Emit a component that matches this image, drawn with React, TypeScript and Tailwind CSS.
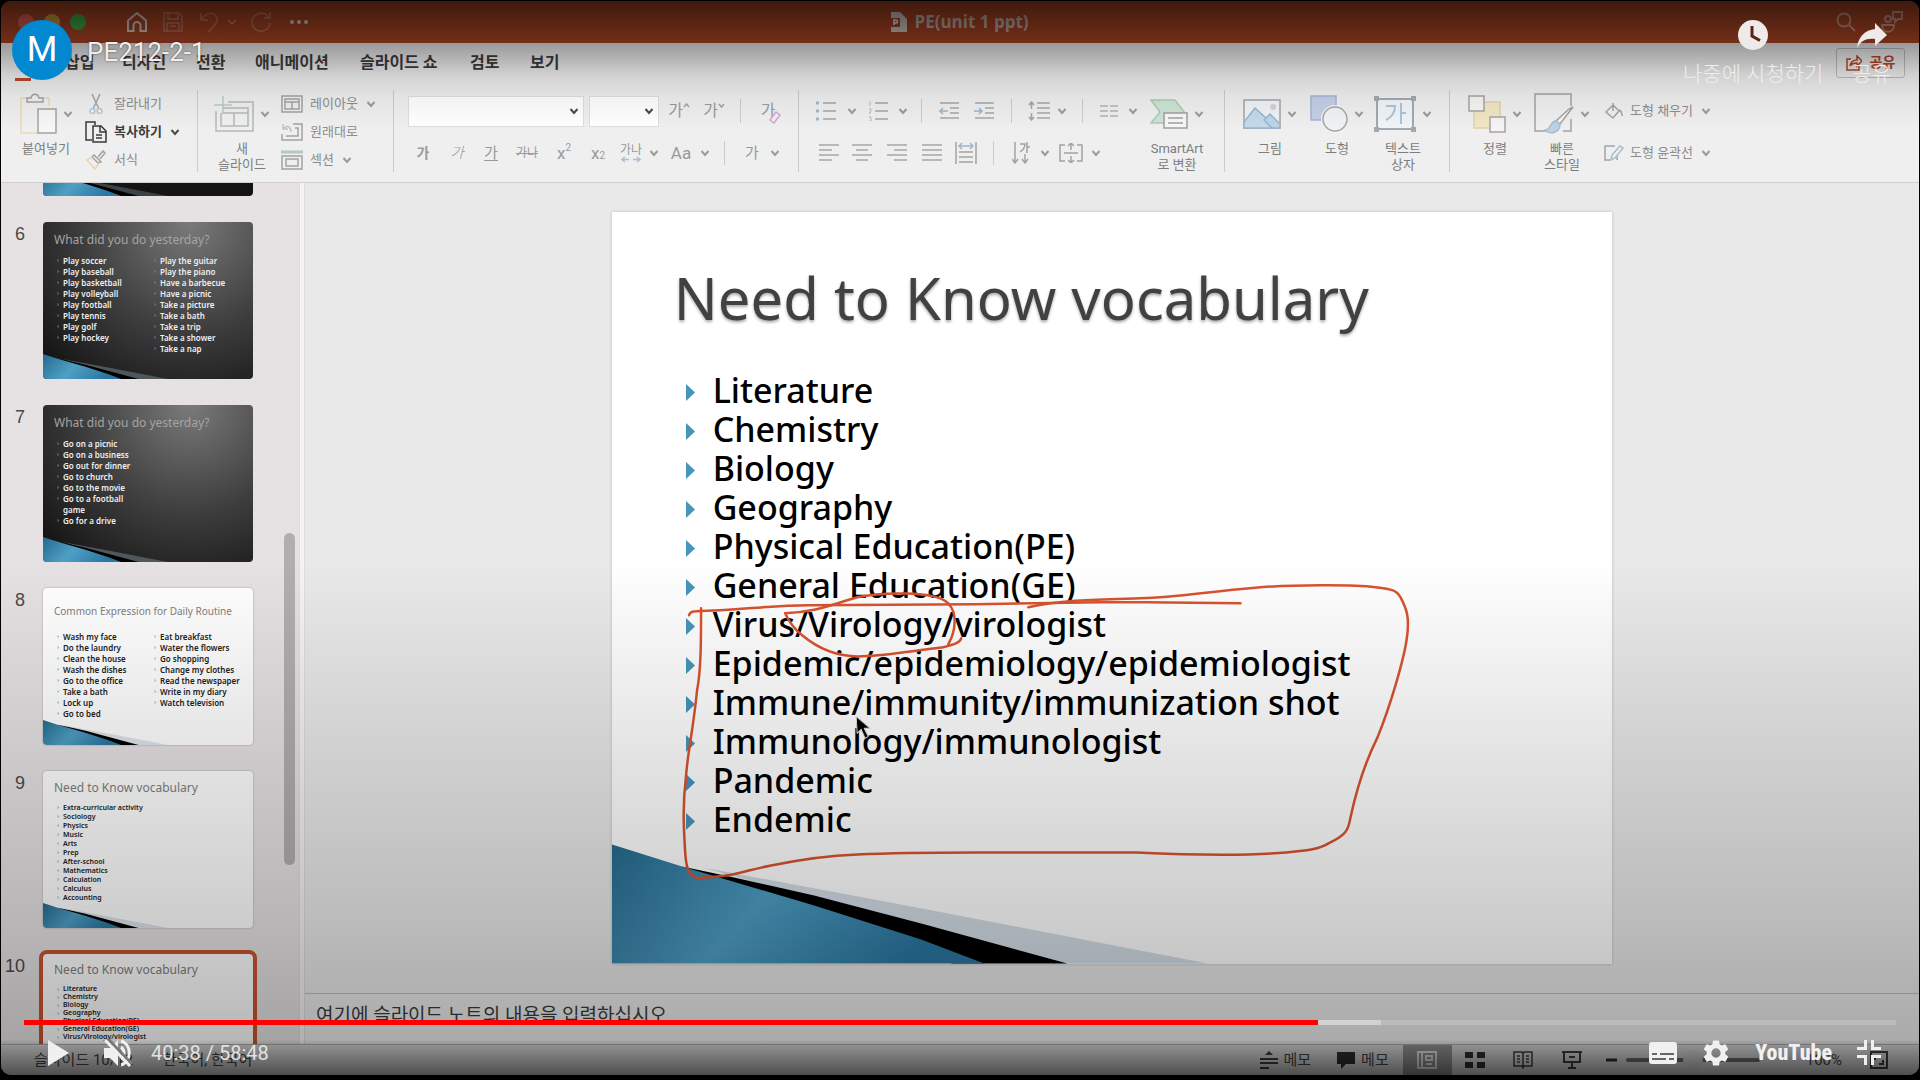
import React from "react";

const KR = "font-['Roboto','Noto_Sans_CJK_KR',sans-serif]";

type IconProps = { w: number; h: number; children: React.ReactNode; className?: string; stroke?: string; sw?: number };
function Svg({ w, h, children, className = "", stroke = "#a3a3a3", sw = 1.5 }: IconProps) {
  return (
    <svg width={w} height={h} viewBox={`0 0 ${w} ${h}`} fill="none" stroke={stroke} strokeWidth={sw} className={`shrink-0 ${className}`} aria-hidden="true">
      {children}
    </svg>
  );
}

function Chevron({ dark = false }: { dark?: boolean }) {
  return (
    <Svg w={10} h={8} stroke={dark ? "#4a4a4a" : "#9b9b9b"} sw={2}>
      <path d="M1.5 2 5 6l3.5-4" />
    </Svg>
  );
}

function Rule() {
  return <div className="h-[82px] w-px shrink-0 bg-[#cccccc]" />;
}

function MiniRule() {
  return <div className="h-6 w-px bg-[#cccccc]" />;
}

function BigButton({ icon, lines, className = "w-[60px]" }: { icon: React.ReactNode; lines: string[]; className?: string }) {
  return (
    <button type="button" className={`flex shrink-0 flex-col items-center text-[13px] leading-4 text-[#7d7d7d] ${className}`}>
      <span className="mb-[3px] flex h-12 items-center gap-1.5">
        {icon}
        <Chevron />
      </span>
      {lines.map((l) => (
        <span key={l} className="whitespace-nowrap">{l}</span>
      ))}
    </button>
  );
}

function RowButton({ icon, label, chevron = false, dark = false, iconClass = "w-6" }: { icon: React.ReactNode; label: string; chevron?: boolean; dark?: boolean; iconClass?: string }) {
  return (
    <button type="button" className={`flex h-7 items-center whitespace-nowrap text-[13px] ${dark ? "font-bold text-[#3c3c3c]" : "text-[#8c8c8c]"}`}>
      <span className={`mr-1.5 flex justify-center ${iconClass}`}>{icon}</span>
      {label}
      {chevron && <span className="ml-2"><Chevron dark={dark} /></span>}
    </button>
  );
}

function Cell({ children, label, className = "" }: { children: React.ReactNode; label: string; className?: string }) {
  return (
    <button type="button" aria-label={label} className={`flex items-center justify-center text-[16px] leading-5 text-[#9a9a9a] ${className}`}>
      {children}
    </button>
  );
}

function Lines({ rows, w = 20, children }: { rows: [number, number][]; w?: number; children?: React.ReactNode }) {
  const gap = rows.length === 3 ? 8 : 5;
  return (
    <Svg w={w} h={20} stroke="#a6a6a6" sw={1.6}>
      {rows.map(([a, b], i) => (
        <path key={i} d={`M${a} ${2 + i * gap}H${b}`} />
      ))}
      {children}
    </Svg>
  );
}

function TitleBar() {
  return (
    <header className="grid h-[42px] shrink-0 grid-cols-3 items-center bg-[#b54826]">
      <div className="flex items-center pl-[17px] text-[#d8c0b8]">
        <div className="flex gap-[10px]">
          <span className="size-4 rounded-full bg-[#e8665c]" />
          <span className="size-4 rounded-full bg-[#d8a43c]" />
          <span className="size-4 rounded-full bg-[#42b549]" />
        </div>
        <div className="ml-10 flex items-center">
          <button type="button" aria-label="홈">
            <Svg w={22} h={22} stroke="#ead9d3" sw={2}><path d="M2 9.5 11 2l9 7.5V20h-5.500v-5.500a3.500 3.500 0 0 0-7 0V20H2z" /></Svg>
          </button>
          <button type="button" aria-label="저장" className="ml-[15px] opacity-35">
            <Svg w={20} h={20} stroke="#ead9d3"><path d="M1 1h15l3 3v15H1zM5 1v6h10V1M4 19v-8h12v8M7 14h6" /></Svg>
          </button>
          <button type="button" aria-label="실행 취소" className="ml-4 opacity-35">
            <Svg w={20} h={22} stroke="#ead9d3"><path d="M2 2v7h7M2 9c4-7 12-8 15-4 4 5-2 10-8 16" /></Svg>
          </button>
          <span className="ml-2 opacity-45"><Svg w={10} h={8} stroke="#ead9d3"><path d="m1 2 4 4 4-4" /></Svg></span>
          <button type="button" aria-label="다시 실행" className="ml-[13px] opacity-35">
            <Svg w={22} h={20} stroke="#ead9d3"><path d="M19 6a9 9 0 1 0 1 5M20 0v6h-6" /></Svg>
          </button>
          <button type="button" aria-label="더 보기" className="ml-[17px]">
            <Svg w={20} h={6} stroke="none"><g fill="#ead9d3"><circle cx="3" cy="3" r="2" /><circle cx="10" cy="3" r="2" /><circle cx="17" cy="3" r="2" /></g></Svg>
          </button>
        </div>
      </div>
      <div className="flex items-center justify-center gap-[7px] font-['Open_Sans','Noto_Sans_CJK_KR',sans-serif] text-[17px] font-bold text-[#cfb9b0]">
        <Svg w={16} h={20} stroke="none">
          <path d="M0 0h9l7 7v13H0z" fill="#e0d6d2" />
          <path d="M0 6h9v9H0z" fill="#b8492a" />
          <path d="M3 13V8h2a1.500 1.500 0 0 1 0 3H3" stroke="#fff" fill="none" />
        </Svg>
        PE(unit 1 ppt)
      </div>
      <div className="flex items-center justify-end gap-6 pr-[15px]">
        <button type="button" aria-label="검색" className="opacity-60">
          <Svg w={20} h={20} stroke="#ead9d3" sw={1.8}><circle cx="8" cy="8" r="6.500" /><path d="m13 13 6 6" /></Svg>
        </button>
        <button type="button" aria-label="공동 작업" className="opacity-60">
          <Svg w={24} h={22} stroke="#ead9d3" sw={1.8}><circle cx="8" cy="8" r="3" /><path d="M2 14h12c0 9-12 9-12 0zM13 1h9v7h-4l-3 3V8h-2z" /></Svg>
        </button>
      </div>
    </header>
  );
}

function Tabs() {
  return (
    <nav className="flex h-[39px] shrink-0 items-center whitespace-nowrap text-[16px] font-bold text-[#3c3c3c]">
      <a href="#home" aria-label="홈" className="ml-3.5 flex h-full w-[50px] items-end pb-px"><span className="h-[3px] w-4 bg-[#b8492a]" /></a>
      <a href="#insert" className="w-[57px]">삽입</a>
      <a href="#design" className="w-[74px]">디자인</a>
      <a href="#transition" className="w-[59px]">전환</a>
      <a href="#animation" className="w-[105px]">애니메이션</a>
      <a href="#show" className="w-[110px]">슬라이드 쇼</a>
      <a href="#review" className="w-[60px]">검토</a>
      <a href="#view">보기</a>
      <button type="button" className="ml-auto mr-[14px] flex h-[30px] w-[69px] items-center justify-center gap-2 rounded-[3px] border border-[#bdbdbd] text-[14px] text-[#b8492a]">
        <Svg w={16} h={16} stroke="#b8492a"><path d="M5 4H1v11h12v-4M4 11c1-5 4-6 7-6V1l5 5-5 5V8c-3 0-5 0-7 3z" /></Svg>
        공유
      </button>
    </nav>
  );
}

function Ribbon() {
  return (
    <div className="flex h-[101px] shrink-0 items-start border-b border-[#cfcfcf] pt-2">
      <BigButton
        className="ml-[15px] w-[60px]"
        lines={["붙여넣기"]}
        icon={
          <Svg w={37} h={42}>
            <path d="M8 5H1v35h18M22 5h7v8" stroke="#ecd9b4" />
            <path d="M7 9V5h4c1-5 7-5 8 0h4v4z" />
            <path d="M18 16h18v24H18z" fill="#f6f6f6" />
          </Svg>
        }
      />
      <div className="ml-2 w-[113px]">
        <RowButton label="잘라내기" icon={<Svg w={14} h={22}><path d="m3 1 7 15M11 1 4 16" /><g stroke="#b5cbdc"><circle cx="3.500" cy="18" r="2.500" /><circle cx="10.500" cy="18" r="2.500" /></g></Svg>} />
        <RowButton dark chevron label="복사하기" icon={<Svg w={22} h={22} stroke="#3a3a3a"><path d="M7 19H1V1h9v3M8 5h8l5 5v11H8zM15 5v6h6M11 14h6M11 17h6" /></Svg>} />
        <RowButton label="서식" icon={<Svg w={20} h={20}><path d="m12 7 5-6 2 2-5 6M8 5l7 7-3 1-6-6z" /><path d="m6 7-5 3 8 9 4-6" stroke="#ecd3a8" /></Svg>} />
      </div>
      <Rule />
      <BigButton
        className="ml-[10px] w-[68px]"
        lines={["새", "슬라이드"]}
        icon={<Svg w={40} h={36}><path d="M14 6h25v29H2V15M8 12h26v18H7V17M20 17v13M8 17h26" stroke="#b4b9ba" /><path d="M9 0v17M0 9h18" stroke="#b8cccc" /></Svg>}
      />
      <div className="ml-1 w-[113px]">
        <RowButton iconClass="w-6" chevron label="레이아웃" icon={<Svg w={22} h={18}><path d="M1 1h20v16H1zM4 4h14v10H4zM4 7h14M11 7v7" /></Svg>} />
        <RowButton iconClass="w-6" label="원래대로" icon={<Svg w={22} h={18}><path d="M12 1h9v16H1v-6M5 13h12V5h-3" /><path d="M2 1v5h5M2 6c4-5 8-2 8 3" stroke="#b9c6cf" /></Svg>} />
        <RowButton iconClass="w-6" chevron label="섹션" icon={<Svg w={22} h={20}><path d="M0 2h22" stroke="#b3c9c5" strokeWidth="3" /><path d="M1 6h20v13H1zM5 9h12v7H5z" /></Svg>} />
      </div>
      <Rule />
      <div className="ml-3.5 w-[390px] shrink-0">
        <div className="grid h-[42px] grid-cols-[176px_5px_70px_40px_30px_22px_34px] items-center justify-items-center">
          <button type="button" aria-label="글꼴" className="flex h-[31px] w-full items-center justify-end border border-[#dedede] bg-white pr-1"><Chevron dark /></button>
          <span />
          <button type="button" aria-label="글꼴 크기" className="flex h-[31px] w-full items-center justify-end border border-[#dedede] bg-white pr-1"><Chevron dark /></button>
          <Cell label="글꼴 크게">가<Svg w={7} h={5} className="mb-3"><path d="m1 4 2.500-3L6 4" /></Svg></Cell>
          <Cell label="글꼴 작게" className="text-[14px]">가<Svg w={7} h={5} className="mb-3"><path d="m1 1 2.500 3L6 1" /></Svg></Cell>
          <MiniRule />
          <Cell label="서식 지우기">
            <span className="relative">가<Svg w={12} h={14} stroke="#cfa9d3" className="absolute -bottom-1 left-2"><path d="m7 1 4 3-6 8-4-3z" fill="#f2eef2" /></Svg></span>
          </Cell>
        </div>
        <div className="grid h-[42px] grid-cols-[30px_38px_30px_42px_32px_36px_30px_16px_38px_10px_28px_28px_18px] items-center justify-items-center">
          <Cell label="굵게"><b className="text-[14px] font-bold">가</b></Cell>
          <Cell label="기울임꼴"><i className="text-[15px] font-light">가</i></Cell>
          <Cell label="밑줄"><u className="text-[15px] underline-offset-2">가</u></Cell>
          <Cell label="취소선"><s className="text-[12px]">가나</s></Cell>
          <Cell label="위 첨자" className="text-[17px]">x<sup className="text-[10px]">2</sup></Cell>
          <Cell label="아래 첨자" className="text-[17px]">x<sub className="text-[10px]">2</sub></Cell>
          <Cell label="문자 간격">
            <span className="flex flex-col items-center text-[12px] leading-3">가나<Svg w={20} h={7} stroke="#a9c0d4"><path d="M8 3.500H1M4 1 1 3.500 4 6M12 3.500h7M16 1l3 2.500L16 6" /></Svg></span>
          </Cell>
          <Chevron />
          <Cell label="대/소문자" className="text-[17px]">Aa</Cell>
          <Chevron />
          <MiniRule />
          <Cell label="글꼴 색"><span className="text-[15px]">가</span></Cell>
          <Chevron />
        </div>
      </div>
      <Rule />
      <div className="ml-3.5 w-[329px] shrink-0">
        <div className="grid h-[42px] grid-cols-[26px_26px_26px_24px_12px_44px_26px_28px_28px_18px_22px_32px_16px] items-center justify-items-center">
          <Cell label="글머리 기호"><Lines rows={[[7, 20], [7, 20], [7, 20]]}><path d="M0 2h3M0 10h3M0 18h3" stroke="#9fb7cb" strokeWidth="3" /></Lines></Cell>
          <Chevron />
          <Cell label="번호 매기기"><Lines rows={[[7, 20], [7, 20], [7, 20]]}><path d="M2 0v5M1 8h2v2l-2 2h2M1 16h2v4H1" stroke="#a9bccb" strokeWidth="1" /></Lines></Cell>
          <Chevron />
          <MiniRule />
          <Cell label="내어쓰기"><Lines rows={[[1, 20], [11, 20], [11, 20], [1, 20]]}><path d="M9 10H1M4 7l-3 3 3 3" stroke="#9fb7cb" /></Lines></Cell>
          <Cell label="들여쓰기"><Lines rows={[[1, 20], [11, 20], [11, 20], [1, 20]]}><path d="M0 10h8M5 7l3 3-3 3" stroke="#9fb7cb" /></Lines></Cell>
          <MiniRule />
          <Cell label="줄 간격"><Lines w={22} rows={[[9, 22], [9, 22], [9, 22], [9, 22]]}><path d="M3.500 1v7M1 4l2.500-3L6 4M3.500 19v-7M1 16l2.500 3L6 16" /></Lines></Cell>
          <Chevron />
          <MiniRule />
          <Cell label="단"><Svg w={18} h={14} stroke="#b4b4b4"><path d="M0 2h8M0 7h8M0 12h8M10 2h8M10 7h8M10 12h8" /></Svg></Cell>
          <Chevron />
        </div>
        <div className="grid h-[42px] grid-cols-[32px_34px_35px_35px_34px_20px_36px_12px_40px_10px] items-center justify-items-center">
          <Cell label="왼쪽 맞춤"><Lines rows={[[0, 20], [0, 13], [0, 20], [0, 13]]} /></Cell>
          <Cell label="가운데 맞춤"><Lines rows={[[0, 20], [4, 16], [0, 20], [4, 16]]} /></Cell>
          <Cell label="오른쪽 맞춤"><Lines rows={[[0, 20], [7, 20], [0, 20], [7, 20]]} /></Cell>
          <Cell label="양쪽 맞춤"><Lines rows={[[0, 20], [0, 20], [0, 20], [0, 20]]} /></Cell>
          <Cell label="균등 분할"><Svg w={22} h={22}><path d="M1 0v22M21 0v22M4 10h14M4 15h14M4 20h14" /><path d="M4 4h14M7 1 4 4l3 3M15 1l3 3-3 3" stroke="#9fb7cb" /></Svg></Cell>
          <MiniRule />
          <Cell label="텍스트 방향"><Svg w={18} h={22}><path d="M3 0v20M0 17l3 4 3-4M13 12v8M10 17l3 4 3-4M8 2h5c0 4-2 6-5 8M15 0v11M15 5h3" /></Svg></Cell>
          <Chevron />
          <Cell label="텍스트 맞춤"><Svg w={24} h={20}><path d="M6 2H1v16h5M18 2h5v16h-5M5 10h14M12 0v7M9 3l3-3 3 3M12 20v-7M9 17l3 3 3-3" /></Svg></Cell>
          <Chevron />
        </div>
      </div>
      <BigButton
        className="w-[70px]"
        lines={["SmartArt", "로 변환"]}
        icon={<Svg w={38} h={30}><path d="M1 1h24l10 13-6 10H1l9-11z" fill="#cde3d4" stroke="#a8ccb4" /><path d="M14 14h23v15H14zM18 19h15M18 24h15" fill="#f7f7f7" stroke="#a0a0a0" /></Svg>}
      />
      <span className="w-3" />
      <Rule />
      <BigButton
        className="ml-[15px] w-[60px]"
        lines={["그림"]}
        icon={<Svg w={38} h={30}><path d="M1 1h36v28H1z" fill="#eef2f6" /><path d="M1 23 12 9l22 20H1z" fill="#c4d9ec" stroke="#9ab3cb" /><path d="m21 21 6-6 10 10v4h-8z" fill="#bcd4ea" stroke="#9ab3cb" /><circle cx="30" cy="8" r="3" fill="#d8d1c8" stroke="none" /></Svg>}
      />
      <BigButton
        className="ml-[7px] w-[60px]"
        lines={["도형"]}
        icon={<Svg w={38} h={38}><path d="M1 1h25v24H1z" fill="#c2cfe6" stroke="#a5b5d2" /><circle cx="25" cy="24" r="14" fill="#f1f2f4" stroke="none" /><circle cx="25" cy="24" r="12" fill="#f1f2f4" stroke="#a6a6a6" /></Svg>}
      />
      <BigButton
        className="ml-[5px] w-[62px]"
        lines={["텍스트", "상자"]}
        icon={
          <Svg w={42} h={36} stroke="#a2a8b0" sw={2}>
            <path d="M3 3h36v30H3z" fill="#f1f4f7" />
            <g fill="#a2a8b0" stroke="none"><path d="M0 0h5v5H0zM37 0h5v5h-5zM0 31h5v5H0zM37 31h5v5h-5z" /></g>
            <path d="M12 10h9c0 7-3 11-9 14M27 7v21M27 17h5" stroke="#a9c4dc" />
          </Svg>
        }
      />
      <span className="w-[15px]" />
      <Rule />
      <BigButton
        className="ml-[15px] w-[60px]"
        lines={["정렬"]}
        icon={<Svg w={38} h={38}><path d="M6 7h26v26H6z" fill="#f0e6c4" stroke="#e0d2a8" /><path d="M1 1h15v15H1zM22 22h15v15H22z" fill="#f6f3f3" stroke="#a8a3a3" /></Svg>}
      />
      <BigButton
        className="ml-[7px] w-[60px]"
        lines={["빠른", "스타일"]}
        icon={<Svg w={40} h={42}><path d="M13 38H1V1h36v12M37 26v12h-8" /><path d="M39 14 26 31l-4-3L35 16z" fill="#f4f4f4" /><path d="M22 28c-6 0-4 8-11 9 5 5 15 3 15-6z" fill="#b9d2e6" stroke="#a4bdd1" /></Svg>}
      />
      <div className="ml-3">
        <div className="flex h-[42px] items-center">
          <RowButton iconClass="w-5" chevron label="도형 채우기" icon={<Svg w={18} h={18}><path d="m8 3 6 6-6 7-7-6zM8 9V1M14 8c3 1 3 4 3 6" /></Svg>} />
        </div>
        <div className="flex h-[42px] items-center">
          <RowButton iconClass="w-5" chevron label="도형 윤곽선" icon={<Svg w={20} h={16}><path d="M11 1H1v14h5M13 15v-4" /><path d="m7 15 1-5 8-9 3 2-8 10z" stroke="#a9bccb" /></Svg>} />
        </div>
      </div>
    </div>
  );
}

function Wave({ id, shade = "#d3dde7" }: { id: string; shade?: string }) {
  return (
    <svg viewBox="0 0 1000 751" preserveAspectRatio="none" className="absolute inset-0 size-full" aria-hidden="true">
      <defs>
        <linearGradient id={id} x1="0" y1="0" x2="1" y2="0.3">
          <stop offset="0" stopColor="#256a8e" />
          <stop offset="0.500" stopColor="#4f9fc5" />
          <stop offset="1" stopColor="#2a76a0" />
        </linearGradient>
      </defs>
      <path d="M90 655 310 696 595 751H440z" fill={shade} />
      <path d="M70 654 122 665 202 683 309 711 455 751H340L200 710z" fill="#000" />
      <path d="M0 632 70 654 202 693 309 727 372 751H0z" fill={`url(#${id})`} />
    </svg>
  );
}

type Thumb = { n: number; title: string; dark?: boolean; cols: string[][]; titleClass: string; listClass: string };
const thumbs: Thumb[] = [
  {
    n: 6, title: "What did you do yesterday?", dark: true,
    titleClass: "pt-1.5 text-[12px] leading-6", listClass: "pt-[3px] text-[8px] leading-[11px]",
    cols: [
      ["Play soccer", "Play baseball", "Play basketball", "Play volleyball", "Play football", "Play tennis", "Play golf", "Play hockey"],
      ["Play the guitar", "Play the piano", "Have a barbecue", "Have a picnic", "Take a picture", "Take a bath", "Take a trip", "Take a shower", "Take a nap"],
    ],
  },
  {
    n: 7, title: "What did you do yesterday?", dark: true,
    titleClass: "pt-1.5 text-[12px] leading-6", listClass: "pt-[3px] text-[8px] leading-[11px]",
    cols: [["Go on a picnic", "Go on a business", "Go out for dinner", "Go to church", "Go to the movie", "Go to a football game", "Go for a drive"]],
  },
  {
    n: 8, title: "Common Expression for Daily Routine",
    titleClass: "pt-[11px] text-[10px] leading-6", listClass: "pt-2 text-[8px] leading-[11px]",
    cols: [
      ["Wash my face", "Do the laundry", "Clean the house", "Wash the dishes", "Go to the office", "Take a bath", "Lock up", "Go to bed"],
      ["Eat breakfast", "Water the flowers", "Go shopping", "Change my clothes", "Read the newspaper", "Write in my diary", "Watch television"],
    ],
  },
  {
    n: 9, title: "Need to Know vocabulary",
    titleClass: "pt-[5px] text-[12px] leading-6", listClass: "pt-[3px] text-[7px] leading-[9px]",
    cols: [["Extra-curricular activity", "Sociology", "Physics", "Music", "Arts", "Prep", "After-school", "Mathematics", "Calculation", "Calculus", "Accounting"]],
  },
  {
    n: 10, title: "Need to Know vocabulary",
    titleClass: "pt-1 text-[12px] leading-6", listClass: "pt-[3px] text-[7px] leading-[8px]",
    cols: [["Literature", "Chemistry", "Biology", "Geography", "Physical Education(PE)", "General Education(GE)", "Virus/Virology/virologist"]],
  },
];

function Sidebar() {
  return (
    <aside className="relative w-[298px] shrink-0 overflow-hidden bg-[#e6e2e4]">
      <div className="absolute inset-x-0 top-0 flex flex-col gap-[26px] pl-[42px]">
        <div className="flex h-[13px] w-[210px] items-end overflow-hidden rounded-b">
          <div className="relative h-[157px] w-full shrink-0 bg-[#141414]"><Wave id="w5" shade="#3c4347" /></div>
        </div>
        {thumbs.map((t) => (
          <div key={t.n} className="relative h-[157px] w-[210px]">
            <span className="absolute top-0 right-full mr-[18px] font-['Liberation_Sans',sans-serif] text-[18px] leading-6 text-[#4a4a4a]">{t.n}</span>
            <div
              className={`relative h-full w-full overflow-hidden rounded font-['Noto_Sans',sans-serif] ${
                t.dark ? "bg-[radial-gradient(circle_at_70%_0%,#7a7a7a,#3e3e3e_50%,#0c0c0c)] text-[#f0f0f0]" : "bg-white text-[#222] shadow-[0_0_2px_#999]"
              } ${t.n === 10 ? "outline-4 outline-[#c8532f]" : ""}`}
            >
              <Wave id={`w${t.n}`} shade={t.dark ? "#4f575b" : "#dde4ea"} />
              <div className="relative">
                <h3 className={`pl-[11px] whitespace-nowrap ${t.titleClass} ${t.dark ? "text-[#a4a4a4]" : "text-[#808080]"}`}>{t.title}</h3>
                <div className={`grid grid-cols-[97px_1fr] pl-5 font-semibold ${t.listClass}`}>
                  {t.cols.map((c, i) => (
                    <ul key={i} className="w-[100px]">
                      {c.map((x) => (
                        <li key={x} className="relative w-max max-w-[100px]">
                          <span className="absolute -left-1.5 text-[6px] text-[#6f9fb4]">›</span>
                          {x === "Go to a football game" ? <>Go to a football<br />game</> : x}
                        </li>
                      ))}
                    </ul>
                  ))}
                </div>
              </div>
            </div>
          </div>
        ))}
      </div>
      <div className="absolute top-[350px] right-1 h-[332px] w-[11px] rounded-full bg-[#b2aeb0]" />
    </aside>
  );
}

const vocabulary = [
  "Literature", "Chemistry", "Biology", "Geography", "Physical Education(PE)", "General Education(GE)",
  "Virus/Virology/virologist", "Epidemic/epidemiology/epidemiologist", "Immune/immunity/immunization shot",
  "Immunology/immunologist", "Pandemic", "Endemic",
];

function Slide() {
  return (
    <article className="relative aspect-[1000/751] w-[62%] bg-white font-['Noto_Sans',sans-serif] shadow-[0_0_3px_#bbb]">
      <Wave id="main-wave" />
      <div className="relative">
        <h1 className="pt-[46px] pl-[62px] text-[58px] leading-[80px] text-[#414141] [text-shadow:0_2px_3px_#0005]">Need to Know vocabulary</h1>
        <ul className="pt-[33px] text-[34px] leading-[39px] font-medium text-black">
          {vocabulary.map((v) => (
            <li key={v} className="flex items-center whitespace-nowrap pl-[74px]">
              <svg width="9" height="17" viewBox="0 0 9 17" className="mt-1 mr-[18px] shrink-0" aria-hidden="true"><path d="M0 0 9 8.500 0 17z" fill="#4496bb" /></svg>
              {v}
            </li>
          ))}
        </ul>
      </div>
      <svg viewBox="612 212 1000 751" className="absolute inset-0 size-full" fill="none" stroke="#d9532f" strokeWidth="2.500" strokeLinejoin="round" strokeLinecap="round" aria-hidden="true">
        <path d="M689 615Q690 611 696 611C740 610 770 605 808 605L975 604 1100 602 1145 602 1240 603" />
        <path d="M701 608C701 640 701 670 697 690 693 730 688 750 686 775 682 810 684 830 685 850 686 870 689 880 705 877 735 876 745 870 771 865 800 859 830 855 857 854 900 852 940 852 975 852L1136 852C1200 855 1250 855 1286 852 1310 850 1320 848 1328 843 1345 835 1348 830 1350 817 1358 780 1368 755 1377 737 1390 705 1403 660 1406 640 1410 615 1405 607 1400 597 1396 590 1392 589 1375 587 1350 584 1290 585 1260 587 1200 592 1180 597 1140 598 1110 599 1060 599 1028 607" />
        <path d="M785 613C788 620 795 630 802 635 820 650 840 657 862 656 890 655 915 650 943 647 955 644 960 642 961 638 M948 644C956 630 957 612 948 603 935 590 880 592 857 597 830 605 815 612 785 613" />
        <path d="m856 716 1 17 4-4 4 9 3-2-4-8h6z" fill="#000" stroke="#ddd" strokeWidth="1" />
      </svg>
    </article>
  );
}

function StatusBar() {
  return (
    <footer className="flex h-[31px] shrink-0 items-center whitespace-nowrap border-t border-[#b5b5b5] bg-[#ededed] pl-[33px] text-[15px] text-[#4a4a4a]">
      <span>슬라이드 10/12</span>
      <span className="ml-[30px]">한국어, 한국어</span>
      <div className="ml-auto flex h-full items-center">
        <button type="button" className="flex items-center gap-1.5"><Svg w={18} h={18} stroke="#444" sw={2}><path d="M0 8h18M0 12h18M0 17h9" /><path d="M9 0l4 4H5z" fill="#444" stroke="none" /></Svg>메모</button>
        <button type="button" className="ml-[26px] flex items-center gap-1.5"><Svg w={18} h={18} stroke="none"><path d="M0 1h18v12H9l-5 5v-5H0z" fill="#333" /></Svg>메모</button>
        <button type="button" aria-label="기본" className="ml-3.5 flex h-full w-[49px] items-center justify-center bg-[#a0a0a0]"><Svg w={20} h={18} stroke="#fff" sw={2}><path d="M1 1h18v16H1zM5 1v16M9 5h6v4H9zM9 13h6" /></Svg></button>
        <button type="button" aria-label="여러 슬라이드" className="ml-[13px]"><Svg w={21} h={16} stroke="none"><path d="M0 0h8v6H0zM12 0h8v6h-8zM0 10h8v6H0zM12 10h8v6h-8z" fill="#333" /></Svg></button>
        <button type="button" aria-label="읽기용 보기" className="ml-[27px]"><Svg w={20} h={18} stroke="#444"><path d="M1 1h8l1 2 1-2h8v14h-8l-1 2-1-2H1zM10 3v14M4 5h3M4 8h3M4 11h3M13 5h3M13 8h3M13 11h3" /></Svg></button>
        <button type="button" aria-label="슬라이드 쇼" className="ml-[29px]"><Svg w={20} h={18} stroke="#444" sw={2}><path d="M0 1h20M2 1v10h16V1M10 11v6M6 17h8M7 6h6" /></Svg></button>
        <button type="button" aria-label="축소" className="ml-6"><Svg w={11} h={4} stroke="#333" sw={3}><path d="M0 2h11" /></Svg></button>
        <input type="range" aria-label="확대/축소" defaultValue={50} className="ml-[9px] h-1 w-[134px] appearance-none rounded bg-[#777] [&::-webkit-slider-thumb]:size-5 [&::-webkit-slider-thumb]:appearance-none [&::-webkit-slider-thumb]:rounded-full [&::-webkit-slider-thumb]:bg-[#e8e8e8]" />
        <span className="ml-[46px]">100%</span>
        <button type="button" aria-label="창에 맞춤" className="mr-[31px] ml-7"><Svg w={18} h={18} stroke="#444" sw={2}><path d="M1 1h16v16H1zM5 9V5h4M13 9v4H9" /></Svg></button>
      </div>
    </footer>
  );
}

function PlayerTop() {
  return (
    <div className="absolute inset-x-0 top-0 flex items-start justify-between pt-5 pr-[29px] pl-[12px] text-[#eeeeee]">
      <div className="flex items-center gap-[15px] font-['Roboto',sans-serif]">
        <a href="#channel" aria-label="채널" className="flex size-[60px] items-center justify-center rounded-full bg-[#0288d1] text-[35px] text-white">M</a>
        <a href="#video" className="pt-1 text-[26px] leading-8 [text-shadow:0_0_2px_#0009]">PE212-2-1</a>
      </div>
      <div className="flex gap-[29px] text-[21px] leading-8 font-light [text-shadow:0_0_2px_#0009]">
        <button type="button" className="flex flex-col items-center">
          <span className="flex h-[38px] items-start"><svg width="30" height="30" viewBox="0 0 30 30" aria-hidden="true"><circle cx="15" cy="15" r="15" fill="#eeeae9" /><path d="M14 6v10l8 4.500" fill="none" stroke="#5a2412" strokeWidth="3" /></svg></span>
          나중에 시청하기
        </button>
        <button type="button" className="flex flex-col items-center">
          <span className="flex h-[38px] items-start pt-[3px]"><svg width="30" height="25" viewBox="0 0 30 25" aria-hidden="true"><path d="M18 0 30 12 18 23v-7C9 15 4 18 0 25 1 14 8 7 18 6z" fill="#eeeae9" /></svg></span>
          공유
        </button>
      </div>
    </div>
  );
}

function PlayerBottom() {
  return (
    <div className="absolute inset-x-0 bottom-0 px-6 text-[#f0f0f0]">
      <input
        type="range"
        aria-label="재생 위치"
        defaultValue={69}
        className="block h-[5px] w-full appearance-none bg-[linear-gradient(90deg,#f00_69.1%,#d2d2d2_69.1%,#d2d2d2_72.5%,#bbbbbb_72.5%)] [&::-webkit-slider-thumb]:size-0 [&::-webkit-slider-thumb]:appearance-none"
      />
      <div className="flex h-[55px] items-center pr-[15px] pl-6">
        <button type="button" aria-label="재생"><svg width="21" height="26" viewBox="0 0 21 26" fill="currentColor" aria-hidden="true"><path d="M0 0 21 13 0 26z" /></svg></button>
        <button type="button" aria-label="음소거 해제" className="ml-[34px]">
          <svg width="30" height="28" viewBox="0 0 30 28" fill="none" aria-hidden="true">
            <path d="M1 9h6l8-8v26l-8-8H1z" fill="#f0f0f0" />
            <path d="M18 8c4 3 4 9 0 12M18 2c11 3 11 21 0 24" stroke="#f0f0f0" strokeWidth="3" />
            <path d="M4-1 29 25" stroke="#777" strokeWidth="3" />
            <path d="M2 1 27 27" stroke="#f0f0f0" strokeWidth="3" />
          </svg>
        </button>
        <span className="ml-[18px] font-['Roboto',sans-serif] text-[20px] text-[#e2e2e2]">40:38 / 58:48</span>
        <div className="ml-auto flex items-center">
          <button type="button" aria-label="자막"><svg width="28" height="22" viewBox="0 0 28 22" aria-hidden="true"><rect width="28" height="22" rx="3" fill="#f0f0f0" /><path d="M3 12h5M11 12h14M3 17h14M20 17h5" stroke="#666" strokeWidth="2" /></svg></button>
          <button type="button" aria-label="설정" className="ml-[26px]">
            <svg width="26" height="26" viewBox="2 2 20 20" fill="currentColor" aria-hidden="true"><path d="M19.140 12.940c.04-.3.06-.61.06-.94s-.02-.64-.07-.94l2.030-1.580a.49.49 0 0 0 .12-.61l-1.920-3.320a.49.49 0 0 0-.59-.22l-2.390.96a7 7 0 0 0-1.620-.94l-.36-2.540A.48.48 0 0 0 13.920 2.400h-3.840a.48.48 0 0 0-.47.41l-.36 2.540a7 7 0 0 0-1.620.94l-2.390-.96a.49.49 0 0 0-.59.22L2.740 8.870a.48.48 0 0 0 .12.61l2.030 1.580a6 6 0 0 0 0 1.880l-2.030 1.580a.49.49 0 0 0-.12.61l1.920 3.320c.12.22.37.29.59.22l2.390-.96c.5.38 1.030.7 1.620.94l.36 2.540c.05.24.24.41.48.41h3.840c.24 0 .44-.17.47-.41l.36-2.540a7 7 0 0 0 1.620-.94l2.390.96c.22.08.47 0 .59-.22l1.920-3.320a.48.48 0 0 0-.12-.61zM12 15.600a3.600 3.600 0 1 1 0-7.200 3.600 3.600 0 0 1 0 7.200z" /></svg>
          </button>
          <a href="#youtube" className="ml-[26px] font-['Roboto_Condensed','Open_Sans_Condensed','Roboto',sans-serif] text-[22px] leading-7 font-extrabold">YouTube</a>
          <button type="button" aria-label="전체화면 종료" className="ml-[25px]"><svg width="24" height="25" viewBox="0 0 24 25" fill="none" stroke="currentColor" strokeWidth="3" aria-hidden="true"><path d="M0 8.500h8.500V0M15.500 0v8.500H24M0 16.500h8.500V25M24 16.500h-8.500V25" /></svg></button>
        </div>
      </div>
    </div>
  );
}

export default function App() {
  return (
    <main className={`flex h-screen flex-col overflow-hidden bg-black p-px pb-[5px] ${KR}`}>
      <div className="flex min-h-0 flex-1 flex-col overflow-hidden rounded-[10px] bg-[#efefef]">
        <TitleBar />
        <Tabs />
        <Ribbon />
        <div className="flex min-h-0 flex-1">
          <Sidebar />
          <div className="w-1.5 shrink-0 border-x border-[#dcdcdc] bg-[#f4f4f4]" />
          <div className="flex min-w-0 flex-1 flex-col">
            <section className="flex min-h-0 flex-1 flex-col items-center overflow-hidden bg-[#e9e9e9] pt-[29px]">
              <Slide />
            </section>
            <section className="h-[51px] shrink-0 overflow-hidden border-t border-[#bdbdbd] bg-[#ececec] pt-2 pl-[11px] text-[19px] leading-7 text-[#3a3a3a]">여기에 슬라이드 노트의 내용을 입력하십시오</section>
          </div>
        </div>
        <StatusBar />
      </div>
      <div className="pointer-events-none absolute inset-x-0 top-0 h-[130px] bg-[linear-gradient(#000000a8,#0000005e_42px,#0000001f_76px,#0000000d_96px,#0000)]" />
      <div className="pointer-events-none absolute inset-x-0 bottom-0 h-[520px] bg-[linear-gradient(#0000,#0000000d_90px,#0000001f_220px,#00000033_370px,#00000047_480px,#00000066_486px,#000000ab_515px)]" />
      <PlayerTop />
      <PlayerBottom />
    </main>
  );
}
